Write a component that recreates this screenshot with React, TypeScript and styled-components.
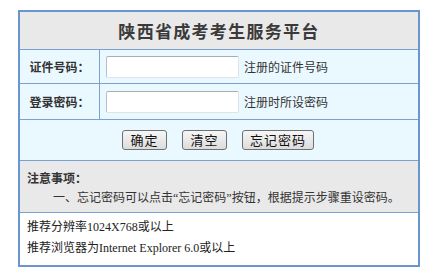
import React from "react";
import styled, { createGlobalStyle } from "styled-components";

const GlobalStyle = createGlobalStyle`
  html, body {
    margin: 0;
    padding: 0;
    background: #ffffff;
  }
  body {
    font-family: "Liberation Serif", "Noto Sans CJK SC", serif;
    font-size: 12px;
    color: #333;
  }
`;

const cjk = `"Noto Sans CJK SC", "Liberation Sans", sans-serif`;

function App() {
  return (
    <Page>
      <GlobalStyle />
      <Panel>
        <Header>陕西省成考考生服务平台</Header>
        <FieldRow $height={33}>
          <Label>证件号码：</Label>
          <Value>
            <Input type="text" />
            <Hint>注册的证件号码</Hint>
          </Value>
        </FieldRow>
        <FieldRow $height={35}>
          <Label>登录密码：</Label>
          <Value>
            <Input type="password" />
            <Hint>注册时所设密码</Hint>
          </Value>
        </FieldRow>
        <ButtonRow>
          <Button $width={45}>确定</Button>
          <Button $width={45}>清空</Button>
          <Button $width={72}>忘记密码</Button>
        </ButtonRow>
        <Notes>
          <NotesTitle>注意事项：</NotesTitle>
          <NotesText>
            一、忘记密码可以点击“忘记密码”按钮，根据提示步骤重设密码。
          </NotesText>
        </Notes>
        <Footer>
          <div>推荐分辨率1024X768或以上</div>
          <div>推荐浏览器为Internet Explorer 6.0或以上</div>
        </Footer>
      </Panel>
    </Page>
  );
}

const Page = styled.div`
  padding: 10px 0 0 18px;
`;

const Panel = styled.div`
  width: 398px;
  border: 2px solid #6a95cf;
  display: flex;
  flex-direction: column;
`;

const Header = styled.div`
  height: 37px;
  background: #e9e9e9;
  border-bottom: 1px solid #7aa0d6;
  display: flex;
  align-items: center;
  justify-content: center;
  font-family: ${cjk};
  font-size: 17px;
  font-weight: bold;
  letter-spacing: 1.3px;
  color: #3a3a3a;
`;

const FieldRow = styled.div<{ $height: number }>`
  height: ${(p) => p.$height}px;
  display: flex;
  background: #eaf8ff;
  border-bottom: 1px solid #7aa0d6;
`;

const Label = styled.div`
  width: 79px;
  border-right: 1px solid #7aa0d6;
  display: flex;
  align-items: center;
  justify-content: center;
  font-family: ${cjk};
  font-size: 12px;
  font-weight: bold;
  color: #333;
`;

const Value = styled.div`
  flex: 1;
  display: flex;
  align-items: center;
  padding-left: 6px;
  gap: 5px;
`;

const Input = styled.input`
  box-sizing: border-box;
  width: 133px;
  height: 22px;
  margin: 0;
  padding: 0 3px;
  background: #fff;
  border: 1px solid #dde4ec;
  border-top-color: #a8aeb6;
  border-left-color: #b9bfc7;
  border-radius: 2px;
  outline: none;
`;

const Hint = styled.span`
  font-family: ${cjk};
  font-size: 12px;
  color: #333;
`;

const ButtonRow = styled.div`
  height: 40px;
  background: #eaf8ff;
  border-bottom: 1px solid #7aa0d6;
  display: flex;
  align-items: center;
  padding-left: 102px;
  gap: 15px;
`;

const Button = styled.button<{ $width: number }>`
  box-sizing: border-box;
  width: ${(p) => p.$width}px;
  height: 20px;
  margin: 0;
  padding: 0;
  border: 1px solid #707070;
  border-radius: 3px;
  background: linear-gradient(#f6f6f6, #dcdcdc);
  font-family: ${cjk};
  font-size: 13px;
  line-height: 18px;
  letter-spacing: 1px;
  color: #111;
`;

const Notes = styled.div`
  height: 52px;
  background: #e9e9e9;
  border-bottom: 1px solid #7aa0d6;
  padding: 7px 0 0 7px;
  box-sizing: border-box;
  font-size: 12px;
  line-height: 20px;
`;

const NotesTitle = styled.div`
  font-family: ${cjk};
  font-weight: bold;
  color: #333;
`;

const NotesText = styled.div`
  text-indent: 26px;
  color: #333;
`;

const Footer = styled.div`
  height: 52px;
  box-sizing: border-box;
  background: #fff;
  padding: 4px 0 0 7px;
  line-height: 21px;
  font-size: 12px;
  color: #222;
`;

export default App;
